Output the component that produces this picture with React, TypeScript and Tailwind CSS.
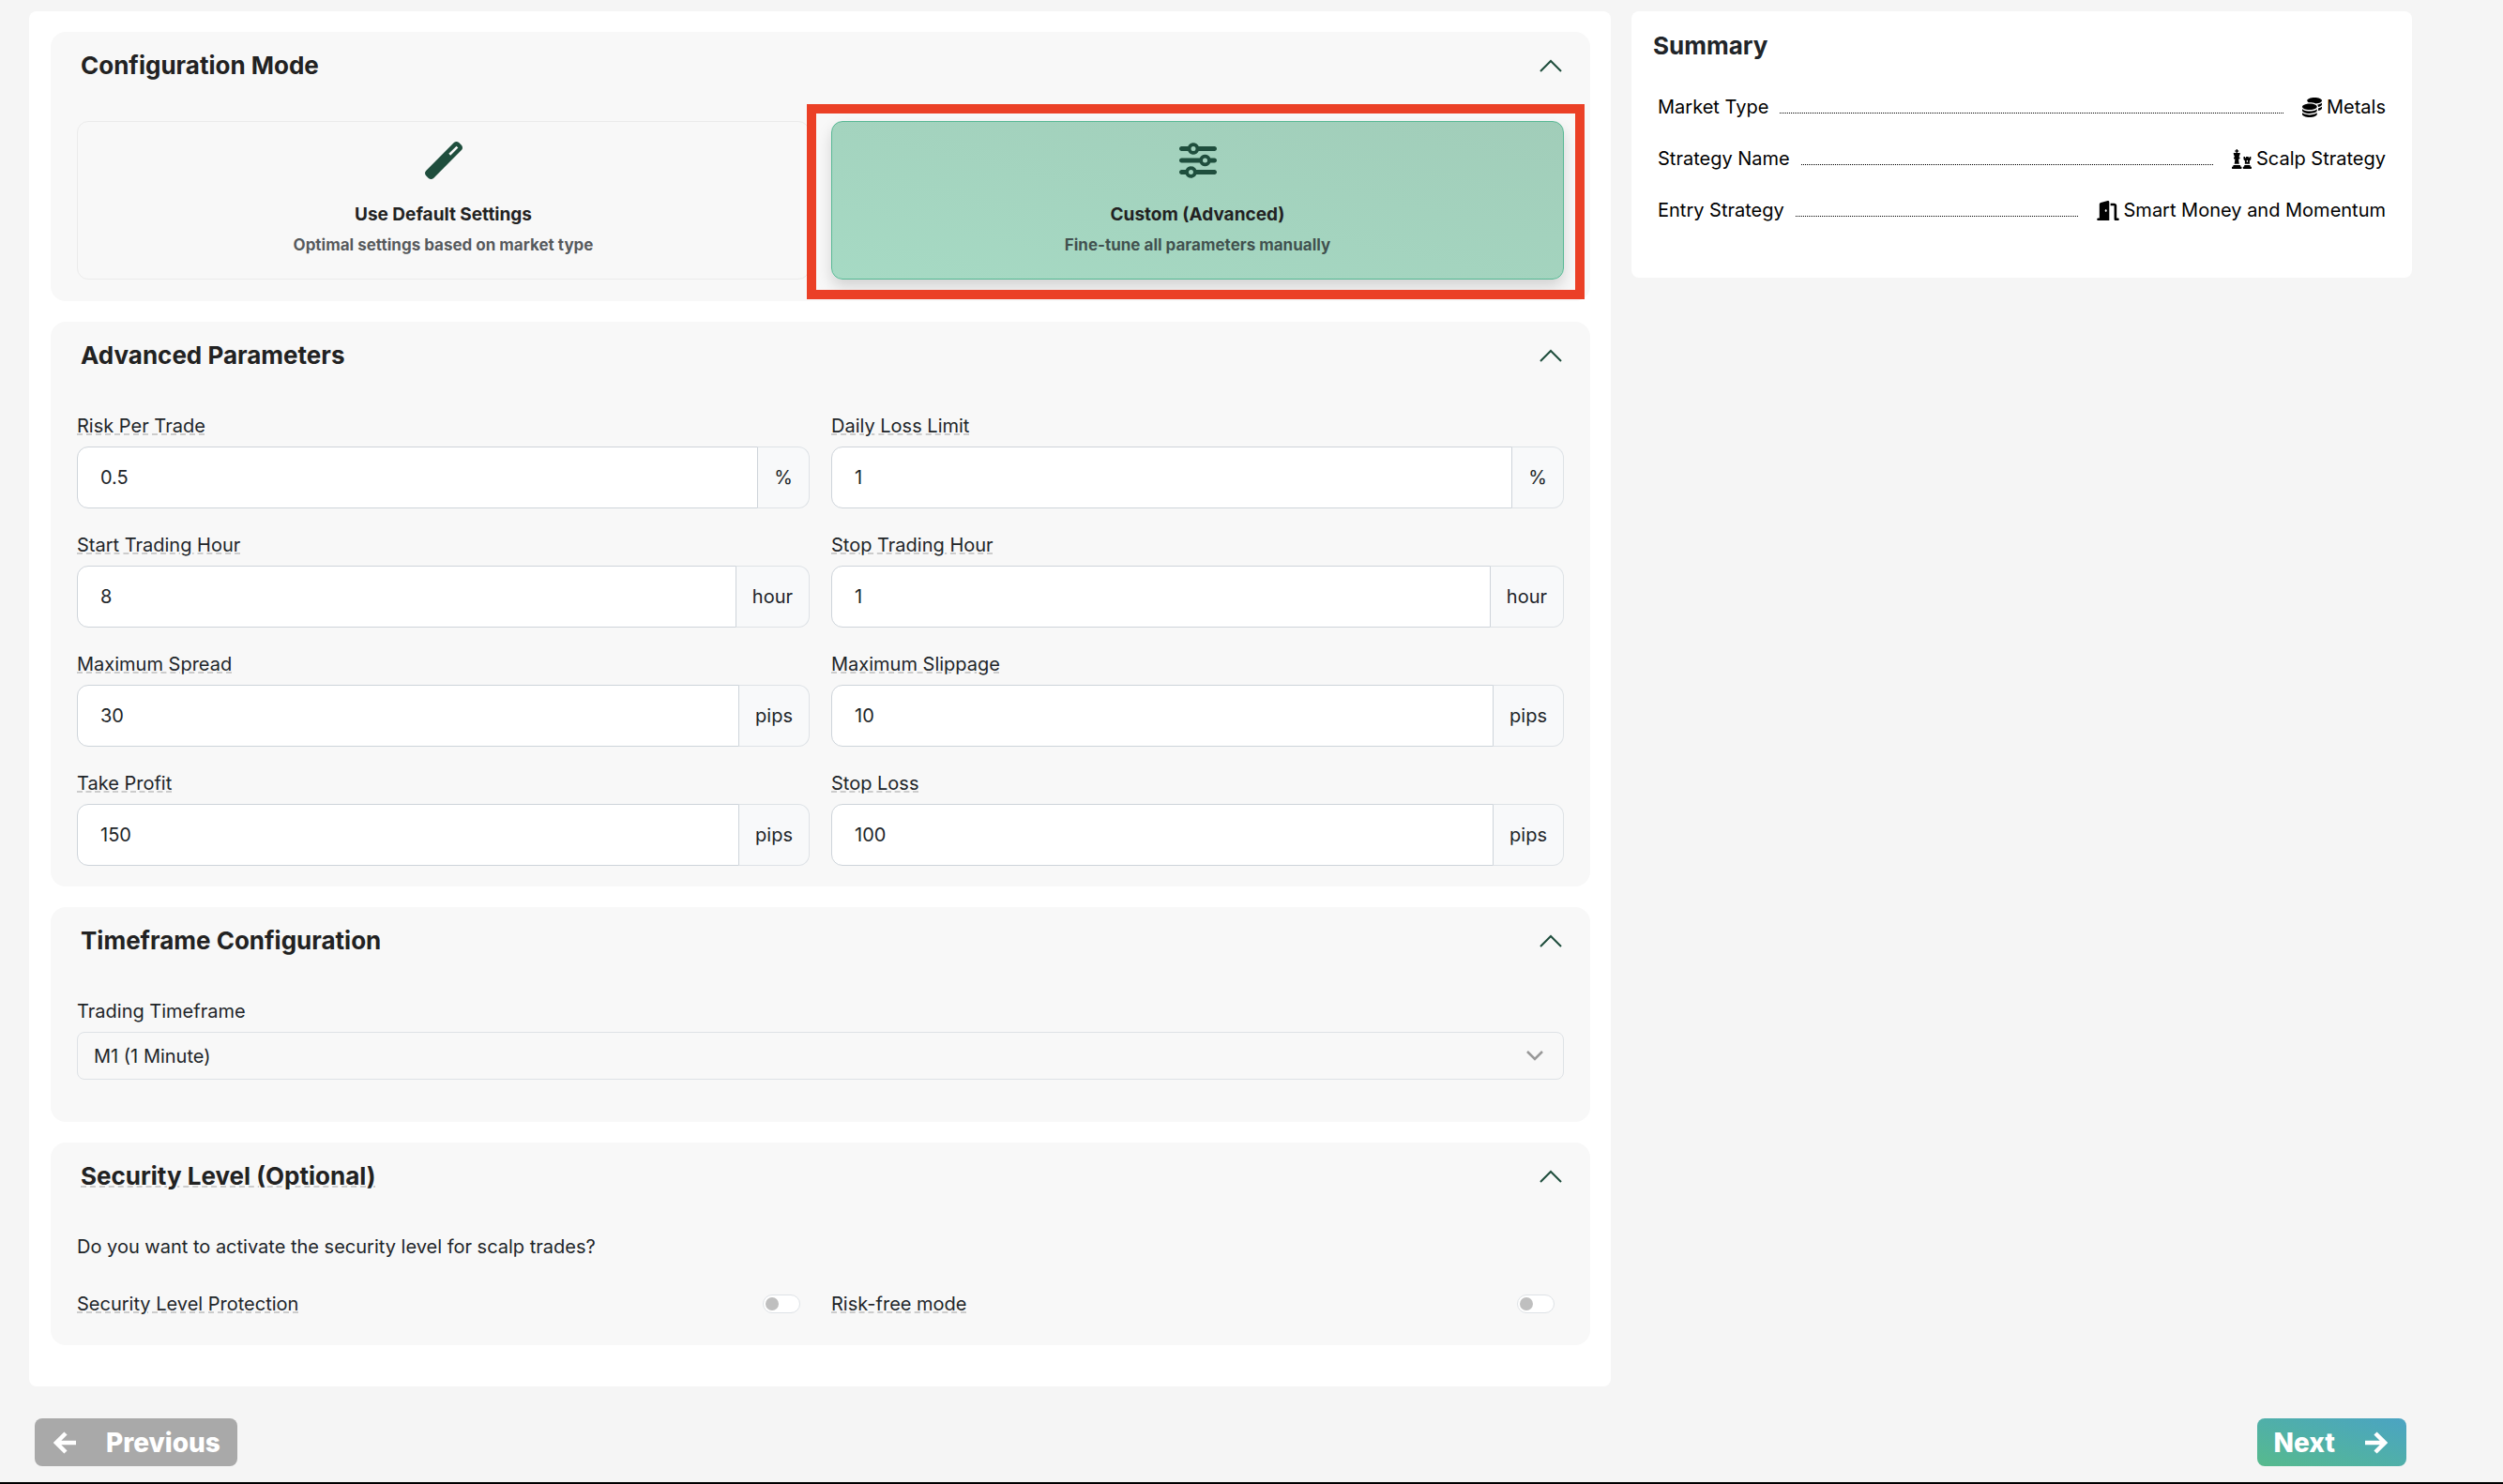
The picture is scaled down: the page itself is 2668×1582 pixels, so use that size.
import React, { useState } from 'react';
import { FaChess } from 'react-icons/fa';
import { FaCoins, FaDoorOpen, FaSliders, FaWandMagic } from 'react-icons/fa6';

const fields = [
  { id: "risk", label: "Risk Per Trade", value: "0.5", unit: "%" },
  { id: "daily-loss", label: "Daily Loss Limit", value: "1", unit: "%" },
  { id: "start-hour", label: "Start Trading Hour", value: "8", unit: "hour" },
  { id: "stop-hour", label: "Stop Trading Hour", value: "1", unit: "hour" },
  { id: "spread", label: "Maximum Spread", value: "30", unit: "pips" },
  { id: "slippage", label: "Maximum Slippage", value: "10", unit: "pips" },
  { id: "take-profit", label: "Take Profit", value: "150", unit: "pips" },
  { id: "stop-loss", label: "Stop Loss", value: "100", unit: "pips" }
];

const summary = [
  { label: "Market Type", value: "Metals", icon: <FaCoins className="size-[21px]" /> },
  { label: "Strategy Name", value: "Scalp Strategy", icon: <FaChess className="size-[21px]" /> },
  { label: "Entry Strategy", value: "Smart Money and Momentum", icon: <FaDoorOpen className="h-[21px] w-6" /> }
];

const hint = "underline decoration-dashed decoration-[#cccccc] decoration-2";

const Arrow = ({ className = "" }: { className?: string }) => (
  <svg viewBox="0 0 24 24" className={`size-6 fill-none stroke-current stroke-[4.5] ${className}`}>
    <path d="M0 12h20M11 2l10 10-10 10" />
  </svg>
);

const Section = ({ title, hinted, className, children }: {
  title: string;
  hinted?: boolean;
  className: string;
  children: React.ReactNode;
}) => {
  const [open, setOpen] = useState(true);

  return (
    <section className={`rounded-2xl bg-[#f8f8f8] px-7 pt-5 ${className}`}>
      <h2 className="mb-[43px] text-[26px] leading-8 font-bold text-[#222222]">
        <button
          type="button"
          aria-expanded={open}
          onClick={() => setOpen(!open)}
          className="flex w-full items-center justify-between pr-0.5 pl-1"
        >
          <span className={hinted ? hint : ""}>{title}</span>
          <svg
            viewBox="0 0 24 14"
            className={`h-3.5 w-6 fill-none stroke-[#1f4e3d] stroke-2 ${open ? "" : "rotate-180"}`}
          >
            <path d="M1 13 12 2l11 11" />
          </svg>
        </button>
      </h2>
      {open && children}
    </section>
  );
};

const ModeCard = ({ title, text, icon, className }: {
  title: string;
  text: string;
  icon: React.ReactNode;
  className: string;
}) => (
  <button
    type="button"
    className={`flex w-full flex-col items-center rounded-xl border pt-[21px] pb-[22px] font-bold ${className}`}
  >
    <span className="mb-[23px] text-[#1f4e3d]">{icon}</span>
    <span className="text-[19px] leading-[30px] text-[#222222]">{title}</span>
    <span className="mt-1 text-[17px] leading-[27px] text-[#212529]/75">{text}</span>
  </button>
);

const Field = ({ id, label, value, unit }: {
  id: string;
  label: string;
  value: string;
  unit: string;
}) => (
  <div>
    <label htmlFor={id} className={`mb-1.5 block w-fit leading-8 ${hint}`}>{label}</label>
    <div className="flex h-[66px]">
      <input
        id={id}
        defaultValue={value}
        className="min-w-0 flex-1 rounded-l-xl border border-[#ced4da] bg-white px-6"
      />
      <span className="flex items-center rounded-r-xl border border-l-0 border-[#dee2e6] bg-[#f8f9fa] px-[17px]">
        {unit}
      </span>
    </div>
  </div>
);

const Toggle = ({ id, label }: { id: string; label: string }) => (
  <div className="flex items-center justify-between pr-2.5">
    <label htmlFor={id} className={hint}>{label}</label>
    <input
      id={id}
      type="checkbox"
      role="switch"
      className="flex h-5 w-10 appearance-none items-center rounded-full border border-[#dee2e6] bg-white px-0.5 before:size-3.5 before:rounded-full before:bg-[#bfbfbf] checked:justify-end checked:before:bg-[#1f4e3d]"
    />
  </div>
);

const App = () => {
  return (
    <div className="flex min-h-screen flex-col border-b-2 border-black bg-[#f5f5f5] pt-3 pr-[97px] pl-[31px] font-['Inter',sans-serif] text-[20px] leading-[30px] text-[#212529]">
      <div className="grid grid-cols-3 items-start gap-[22px]">
        <main className="col-span-2 flex flex-col gap-[22px] rounded-lg bg-white pt-[22px] pr-[22px] pb-11 pl-[23px]">
          <Section title="Configuration Mode" className="pb-[23px]">
            <div className="grid grid-cols-2 gap-[23px]">
              <ModeCard
                title="Use Default Settings"
                text="Optimal settings based on market type"
                icon={<FaWandMagic size={40} />}
                className="border-[#ebebeb]"
              />
              <div className="relative">
                <ModeCard
                  title="Custom (Advanced)"
                  text="Fine-tune all parameters manually"
                  icon={<FaSliders size={40} />}
                  className="border-[#57b894] bg-linear-to-tr from-[#a6dac4] to-[#a1cdb9] shadow-[0_8px_16px_rgba(0,0,0,0.15)]"
                />
                <div className="pointer-events-none absolute -top-[18px] -right-[22px] -bottom-[21px] -left-[26px] border-10 border-[#eb4026]" />
              </div>
            </div>
          </Section>

          <Section title="Advanced Parameters" className="pb-[22px]">
            <div className="grid grid-cols-2 gap-[23px]">
              {fields.map((field) => (
                <Field key={field.id} {...field} />
              ))}
            </div>
          </Section>

          <Section title="Timeframe Configuration" className="pb-[45px]">
            <label htmlFor="timeframe" className="mb-1.5 block leading-8">Trading Timeframe</label>
            <div className="relative">
              <select
                id="timeframe"
                className="block h-[51px] w-full appearance-none rounded-lg border border-[#dee2e6] px-[17px]"
              >
                <option>M1 (1 Minute)</option>
                <option>M5 (5 Minutes)</option>
                <option>M15 (15 Minutes)</option>
              </select>
              <svg
                viewBox="0 0 18 11"
                className="pointer-events-none absolute top-5 right-[22px] h-[11px] w-[18px] fill-none stroke-[#999999] stroke-[2.5]"
              >
                <path d="m1 1 8 8 8-8" />
              </svg>
            </div>
          </Section>

          <Section title="Security Level (Optional)" hinted className="pb-[29px]">
            <p className="mb-[30px] leading-8">Do you want to activate the security level for scalp trades?</p>
            <div className="grid grid-cols-2 gap-[23px]">
              <Toggle id="protection" label="Security Level Protection" />
              <Toggle id="risk-free" label="Risk-free mode" />
            </div>
          </Section>
        </main>

        <aside className="rounded-lg bg-white px-[23px] pt-[21px] pb-[57px] text-black">
          <h2 className="mb-[34px] text-[26px] leading-8 font-bold text-[#212529]">Summary</h2>
          <dl className="flex flex-col gap-[25px] px-[5px]">
            {summary.map((row) => (
              <div key={row.label} className="flex items-center">
                <dt>{row.label}</dt>
                <span className="mt-3 mr-5 ml-3 flex-1 border-b border-dotted border-black" />
                <dd className="flex items-center gap-[5px]">
                  {row.icon}
                  {row.value}
                </dd>
              </div>
            ))}
          </dl>
        </aside>
      </div>

      <nav className="mt-[34px] mb-[17px] flex justify-between px-1.5 text-[28px] font-extrabold text-white">
        <button type="button" className="flex h-[51px] items-center gap-8 rounded-lg bg-[#a9a9a9] pr-[18px] pl-5">
          <Arrow className="rotate-180" />
          Previous
        </button>
        <button type="button" className="flex h-[51px] items-center gap-8 rounded-lg bg-linear-to-tr from-[#57ba8c] to-[#4ba3c3] pr-5 pl-[18px]">
          Next
          <Arrow />
        </button>
      </nav>
    </div>
  );
};

export default App;
